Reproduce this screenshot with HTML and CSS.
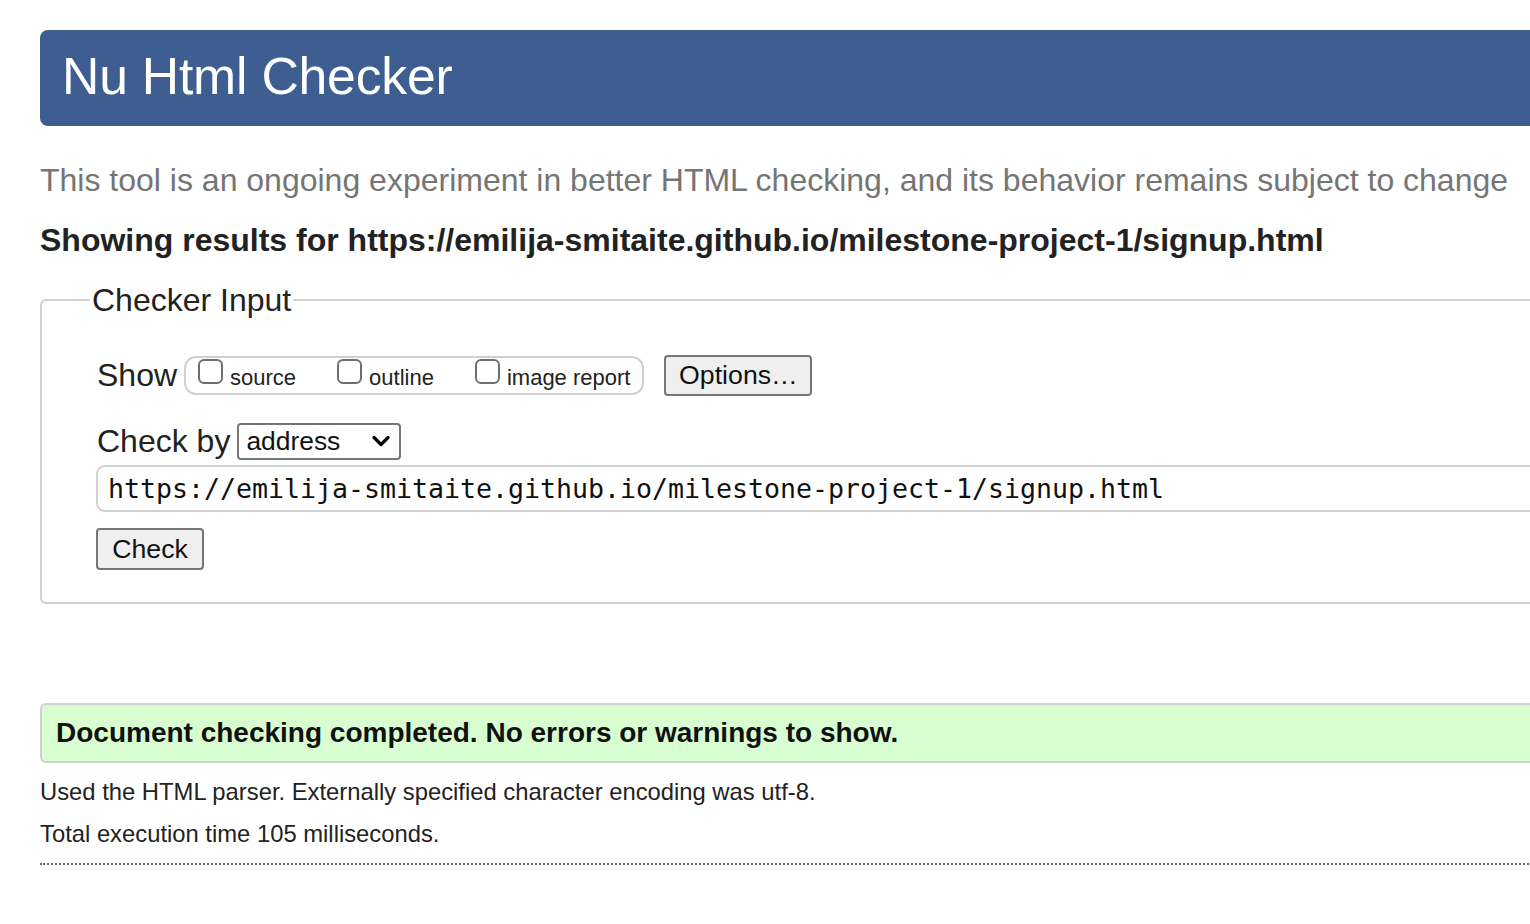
FILE: index.html
```html
<!DOCTYPE html>
<html lang="en">
<head>
<meta charset="utf-8">
<title>Showing results for https://emilija-smitaite.github.io/milestone-project-1/signup.html - Nu Html Checker</title>
<link rel="stylesheet" href="styles.css">
</head>
<body>
<div class="page">
  <header class="banner"><h1 class="title">Nu Html Checker</h1></header>
  <p class="tagline">This tool is an ongoing experiment in better HTML checking, and its behavior remains subject to change</p>
  <p class="results-for">Showing results for https://emilija-smitaite.github.io/milestone-project-1/signup.html</p>
  <form class="checker-form">
    <fieldset class="checker-input">
      <legend class="legend">Checker Input</legend>
      <div class="show-row">
        <span class="row-label">Show</span>
        <div class="show-box">
          <label class="opt"><input type="checkbox" class="cb"><span>source</span></label>
          <label class="opt"><input type="checkbox" class="cb"><span>outline</span></label>
          <label class="opt"><input type="checkbox" class="cb"><span>image report</span></label>
        </div>
        <button type="button" class="btn btn-options">Options…</button>
      </div>
      <div class="checkby-row">
        <span class="row-label">Check by</span>
        <select class="select"><option>address</option></select>
      </div>
      <input class="url" type="text" value="https://emilija-smitaite.github.io/milestone-project-1/signup.html">
      <div class="check-row"><button type="button" class="btn btn-check">Check</button></div>
    </fieldset>
  </form>
  <p class="success">Document checking completed. No errors or warnings to show.</p>
  <p class="details">Used the HTML parser. Externally specified character encoding was utf-8.</p>
  <p class="details second">Total execution time 105 milliseconds.</p>
  <hr class="dotted">
</div>
</body>
</html>
```
FILE: styles.css
```css
html, body {
  margin: 0;
  padding: 0;
  background: #fff;
  overflow: hidden;
}
body {
  font-family: "Liberation Sans", Arial, Helvetica, sans-serif;
  color: #222;
}
.page {
  width: 1580px;
  padding: 30px 0 0 40px;
}
.banner {
  height: 96px;
  background: #3e5d91;
  border-radius: 8px;
  display: flex;
  align-items: center;
}
.title {
  margin: -3px 0 0 22px;
  color: #fff;
  font-size: 51.7px;
  font-weight: normal;
  line-height: 1;
  letter-spacing: -0.2px;
}
.tagline {
  margin: 36px 0 0;
  font-size: 32px;
  line-height: 36px;
  color: #757575;
}
.results-for {
  margin: 24px 0 0;
  font-size: 32px;
  line-height: 36px;
  font-weight: bold;
  color: #222;
}
.checker-form {
  margin: 24px 0 0;
}
.checker-input {
  margin: 0;
  border: 2px solid #d0d0d0;
  border-radius: 6px;
  padding: 0 0 32px 55px;
}
.legend {
  margin-left: -7px;
  padding: 0 2px;
  font-size: 32px;
  line-height: 36px;
  color: #222;
}
.show-row {
  display: flex;
  align-items: center;
  margin-top: 37px;
  height: 40px;
}
.row-label {
  font-size: 32px;
  line-height: 36px;
  color: #222;
  margin-right: 7px;
}
.show-box {
  box-sizing: border-box;
  height: 39px;
  border: 2px solid #d0d0d0;
  border-radius: 12px;
  padding: 0 12px;
  display: flex;
  align-items: center;
  gap: 41px;
}
.opt {
  display: flex;
  align-items: center;
  gap: 7px;
  font-size: 22px;
  color: #222;
}
.opt span {
  padding-top: 6px;
}
.cb {
  appearance: none;
  -webkit-appearance: none;
  margin: 0 0 8px 0;
  width: 25px;
  height: 25px;
  box-sizing: border-box;
  border: 2px solid #6e6e6e;
  border-radius: 6px;
  background: #fff;
}
.btn {
  box-sizing: border-box;
  font-family: "Liberation Sans", Arial, Helvetica, sans-serif;
  background: #efefef;
  border: 2px solid #767676;
  border-radius: 4px;
  color: #111;
  font-size: 26.7px;
  padding: 0;
}
.btn-options {
  margin-left: 20px;
  width: 148px;
  height: 41px;
}
.checkby-row {
  display: flex;
  align-items: center;
  margin-top: 27px;
  height: 38px;
}
.checkby-row .row-label {
  margin-right: 7px;
}
.select {
  appearance: none;
  -webkit-appearance: none;
  box-sizing: border-box;
  width: 164px;
  height: 37px;
  border: 2px solid #767676;
  border-radius: 4px;
  padding: 0 0 0 7px;
  font-family: "Liberation Sans", Arial, Helvetica, sans-serif;
  font-size: 26.4px;
  color: #111;
  background: #fff url("data:image/svg+xml;utf8,<svg xmlns='http://www.w3.org/2000/svg' width='20' height='14' viewBox='0 0 20 14'><path d='M3 3.5 L10 10.5 L17 3.5' fill='none' stroke='black' stroke-width='3.2' stroke-linecap='round' stroke-linejoin='round'/></svg>") no-repeat right 8px center;
  background-size: 20px 14px;
}
.url {
  display: block;
  box-sizing: border-box;
  margin: 5px 0 0 -1px;
  width: 1520px;
  height: 47px;
  border: 2px solid #d0d0d0;
  border-radius: 9px;
  padding: 0 10px;
  font-family: "DejaVu Sans Mono", Menlo, monospace;
  font-size: 26.58px;
  color: #111;
  background: #fff;
}
.check-row {
  margin-top: 16px;
  display: flex;
}
.btn-check {
  margin-left: -1px;
  width: 108px;
  height: 42px;
}
.success {
  margin: 99px 0 0;
  box-sizing: border-box;
  height: 60px;
  border: 2px solid #cfcfcf;
  border-radius: 6px;
  background: #d7fdd1;
  padding: 0 14px;
  display: flex;
  align-items: center;
  font-size: 28px;
  font-weight: bold;
  color: #111;
}
.details {
  margin: 14px 0 0;
  font-size: 23.8px;
  line-height: 30px;
  color: #222;
}
.details.second {
  margin-top: 12px;
}
.dotted {
  margin: 14px 0 0;
  border: 0;
  border-top: 2px dotted #666;
  height: 0;
}
```
